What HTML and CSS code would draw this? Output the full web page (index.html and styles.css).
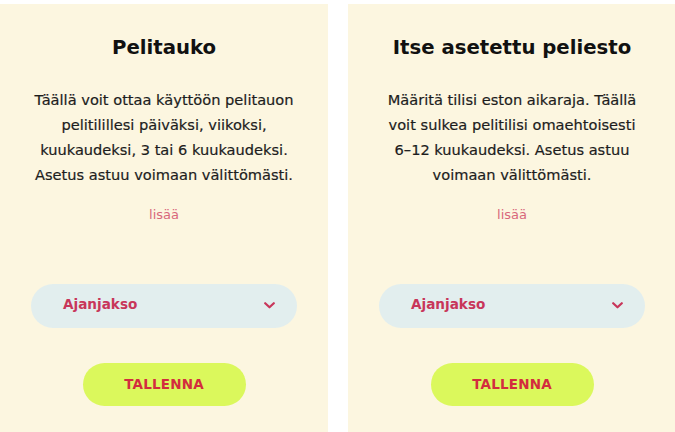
FILE: index.html
```html
<!DOCTYPE html>
<html lang="fi">
<head>
<meta charset="utf-8">
<link rel="stylesheet" href="styles.css">
</head>
<body>
<div class="cards">
  <section class="card">
    <h2 class="title">Pelitauko</h2>
    <p class="desc">Täällä voit ottaa käyttöön pelitauon<br>pelitilillesi päiväksi, viikoksi,<br>kuukaudeksi, 3 tai 6 kuukaudeksi.<br>Asetus astuu voimaan välittömästi.</p>
    <a class="more">lisää</a>
    <div class="select">
      <span class="select-label">Ajanjakso</span>
      <svg class="chev" width="11" height="7" viewBox="0 0 11 7"><path d="M1.2 1.2 L5.5 5.3 L9.8 1.2" fill="none" stroke="#c8365a" stroke-width="2.2" stroke-linecap="round" stroke-linejoin="round"/></svg>
    </div>
    <button class="save">TALLENNA</button>
  </section>
  <section class="card">
    <h2 class="title">Itse asetettu peliesto</h2>
    <p class="desc">Määritä tilisi eston aikaraja. Täällä<br>voit sulkea pelitilisi omaehtoisesti<br>6–12 kuukaudeksi. Asetus astuu<br>voimaan välittömästi.</p>
    <a class="more">lisää</a>
    <div class="select">
      <span class="select-label">Ajanjakso</span>
      <svg class="chev" width="11" height="7" viewBox="0 0 11 7"><path d="M1.2 1.2 L5.5 5.3 L9.8 1.2" fill="none" stroke="#c8365a" stroke-width="2.2" stroke-linecap="round" stroke-linejoin="round"/></svg>
    </div>
    <button class="save">TALLENNA</button>
  </section>
</div>
</body>
</html>
```

FILE: styles.css
```css
html, body {
  margin: 0;
  padding: 0;
  background: #ffffff;
  overflow: hidden;
}
body {
  width: 675px;
  height: 432px;
  font-family: "DejaVu Sans", "Open Sans", sans-serif;
  color: #1b1b1b;
}
.cards {
  display: flex;
  gap: 20px;
  padding-top: 4px;
  width: 700px;
}
.card {
  flex: 0 0 328px;
  width: 328px;
  height: 440px;
  background: #fcf6e0;
  display: flex;
  flex-direction: column;
  align-items: center;
  padding-top: 32px;
  box-sizing: border-box;
}
.title {
  margin: 0;
  font-size: 19.7px;
  line-height: 24px;
  font-weight: bold;
  color: #111;
  text-align: center;
}
.desc {
  margin: 27px 0 0;
  font-size: 14.6px;
  line-height: 25px;
  font-weight: normal;
  text-align: center;
  white-space: nowrap;
  color: #1d1d1d;
  -webkit-text-stroke: 0.2px #1d1d1d;
}
.more {
  margin-top: 18px;
  font-size: 13px;
  line-height: 20px;
  color: #d8687b;
}
.select {
  margin-top: 59px;
  width: 266px;
  height: 44px;
  border-radius: 22px;
  background: #e2eeee;
  display: flex;
  align-items: center;
  justify-content: space-between;
  padding: 0 22px 4px 32px;
  box-sizing: border-box;
}
.select-label {
  font-size: 13.6px;
  font-weight: bold;
  color: #c8365a;
}
.chev {
  display: block;
  margin-top: 3px;
}
.save {
  margin-top: 35px;
  width: 163px;
  height: 43px;
  border: none;
  border-radius: 22px;
  background: #dbf85c;
  font-family: "DejaVu Sans", "Open Sans", sans-serif;
  font-size: 13.5px;
  font-weight: bold;
  color: #d32c3e;
  letter-spacing: 0.2px;
  padding: 0 0 2px;
}
```
